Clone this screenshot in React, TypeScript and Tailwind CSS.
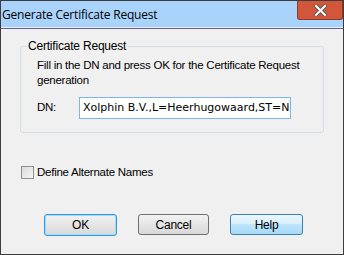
import React from "react";

export default function App() {
  return (
    <div className="w-[344px] h-[255px] bg-[#f0f0f0] border border-[#3c3c3c] flex flex-col overflow-hidden" style={{ fontFamily: '"Liberation Sans", Arial, sans-serif' }}>
      {/* Title bar */}
      <div className="h-[26px] bg-[#aad3fb] flex items-start justify-between relative shrink-0">
        <div className="pl-[1px] pt-[6px] text-[12px] leading-[16px] text-black" style={{ fontFamily: '"Open Sans", "Noto Sans", sans-serif', letterSpacing: "-0.2px" }}>
          Generate Certificate Request
        </div>
        <div className="w-[46px] h-[19px] bg-[#d2573a] border border-t-0 border-[#8a3a28] rounded-b-[3px] flex items-center justify-center">
          <svg width="13" height="11" viewBox="0 0 13 11">
            <path d="M2 1 L11 10 M11 1 L2 10" stroke="#5a5a5a" strokeWidth="4" strokeLinecap="square" />
            <path d="M2 1 L11 10 M11 1 L2 10" stroke="#ffffff" strokeWidth="2" strokeLinecap="square" />
          </svg>
        </div>
      </div>
      <div className="h-[1px] bg-[#e6f0fa] shrink-0" />
      <div className="h-[1px] bg-[#6d5f8c] shrink-0" />
      {/* Body */}
      <div className="flex-1 flex flex-col px-[19px] pt-[10px] text-[11.5px] tracking-[-0.25px] text-black">
        <fieldset className="border border-[#d5dfe5] rounded-[3px] px-[16px] pb-[13px] pt-0 m-0 w-[304px]">
          <legend className="px-[1px] ml-[-10px] leading-[14px] text-[12px] tracking-[-0.2px]">Certificate Request</legend>
          <div className="leading-[15px] mt-[5px]">Fill in the DN and press OK for the Certificate Request generation</div>
          <div className="flex items-center mt-[9px]">
            <span className="w-[42px]">DN:</span>
            <div className="w-[212px] h-[22px] bg-white border border-[#7eb4ea] overflow-hidden whitespace-nowrap pl-[3px] flex items-center tracking-normal" style={{ fontFamily: '"DejaVu Sans", Verdana, sans-serif', fontSize: "11px" }}>
              Xolphin B.V.,L=Heerhugowaard,ST=Noord-Holland,C=NL
            </div>
          </div>
        </fieldset>
        <label className="flex items-center mt-[31px] ml-[1px]">
          <span className="w-[13px] h-[13px] border border-[#8e8f8f] bg-gradient-to-br from-[#dcdcdc] to-[#f4f4f4] inline-block" />
          <span className="ml-[3px]">Define Alternate Names</span>
        </label>
        <div className="flex mt-[33px] ml-[24px] gap-[21px]">
          <button className="w-[73px] h-[22px] border border-[#3399dd] rounded-[3px] bg-gradient-to-b from-[#f2f2f2] to-[#d8d8d8] shadow-[inset_0_0_0_1px_#9fdcf8] text-[12px]">OK</button>
          <button className="w-[71px] h-[21px] border border-[#707070] rounded-[3px] bg-gradient-to-b from-[#f2f2f2] to-[#d8d8d8] text-[12px]">Cancel</button>
          <button className="w-[73px] h-[21px] border border-[#3c7fb1] rounded-[3px] bg-[linear-gradient(#eaf6fd_0%,#d9f0fc_45%,#bee6fd_50%,#a7d9f5_100%)] text-[12px]">Help</button>
        </div>
      </div>
    </div>
  );
}
